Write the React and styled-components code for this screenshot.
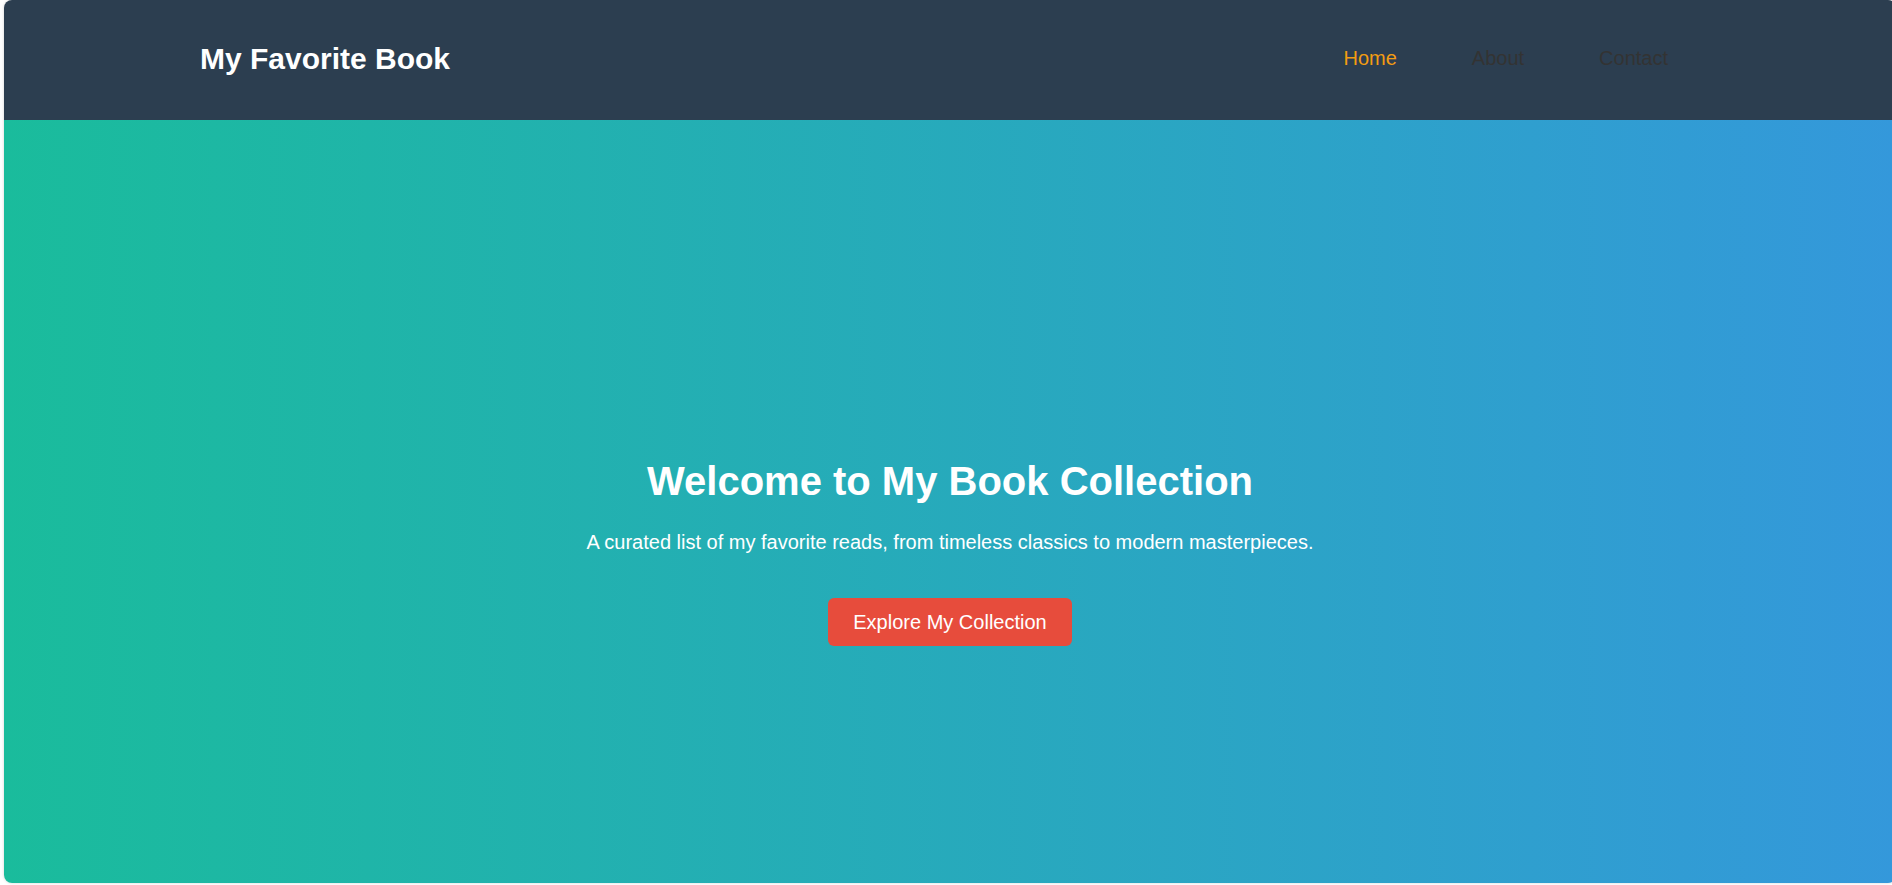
import React from "react";
import styled, { createGlobalStyle } from "styled-components";

const GlobalStyle = createGlobalStyle`
  html, body {
    margin: 0;
    padding: 0;
    background: #ffffff;
    overflow: hidden;
    font-family: "Liberation Sans", Arial, sans-serif;
  }
  * { box-sizing: border-box; }
`;

const Page = styled.div`
  padding-left: 4px;
  width: 1896px;
  height: 885px;
`;

const Frame = styled.div`
  width: 1892px;
  height: 883px;
  border-radius: 8px;
  overflow: hidden;
  display: flex;
  flex-direction: column;
  box-shadow: 0 0 3px rgba(0, 0, 0, 0.18);
`;

const Header = styled.header`
  height: 120px;
  flex: 0 0 120px;
  background: #2c3e50;
  display: flex;
  align-items: center;
  padding-left: 196px;
`;

const HeaderInner = styled.div`
  width: 1468px;
  display: flex;
  align-items: center;
  justify-content: space-between;
`;

const Logo = styled.h1`
  margin: -3px 0 0;
  font-size: 30px;
  font-weight: 700;
  color: #ffffff;
  line-height: normal;
`;

const Nav = styled.nav`
  display: flex;
  gap: 75px;
  margin-top: -4px;
`;

const NavLink = styled.a`
  font-size: 20px;
  color: ${(p) => (p.$active ? "#f39c12" : "#333333")};
  text-decoration: none;
  line-height: normal;
`;

const Hero = styled.section`
  flex: 1;
  background: linear-gradient(to right, #1abc9c, #3498db);
  display: flex;
  flex-direction: column;
  align-items: center;
  justify-content: center;
  padding-top: 102px;
  color: #ffffff;
  text-align: center;
`;

const Title = styled.h2`
  margin: 0 0 27px;
  font-size: 40px;
  font-weight: 700;
  line-height: normal;
`;

const Subtitle = styled.p`
  margin: 0 0 44px;
  font-size: 20px;
  line-height: normal;
`;

const Button = styled.button`
  font-family: "Liberation Sans", Arial, sans-serif;
  font-size: 20px;
  line-height: normal;
  color: #ffffff;
  background: #e74c3c;
  border: none;
  border-radius: 6px;
  padding: 12.5px 25px;
  cursor: pointer;
`;

export default function App() {
  return (
    <>
      <GlobalStyle />
      <Page>
        <Frame>
          <Header>
            <HeaderInner>
              <Logo>My Favorite Book</Logo>
              <Nav>
                <NavLink href="#" $active>Home</NavLink>
                <NavLink href="#">About</NavLink>
                <NavLink href="#">Contact</NavLink>
              </Nav>
            </HeaderInner>
          </Header>
          <Hero>
            <Title>Welcome to My Book Collection</Title>
            <Subtitle>
              A curated list of my favorite reads, from timeless classics to modern masterpieces.
            </Subtitle>
            <Button>Explore My Collection</Button>
          </Hero>
        </Frame>
      </Page>
    </>
  );
}
